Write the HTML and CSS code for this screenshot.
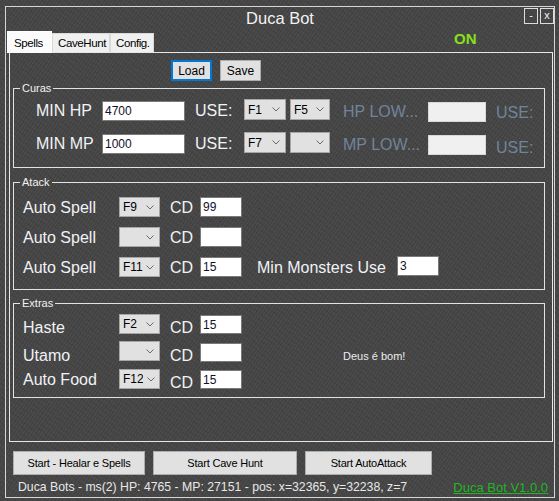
FILE: index.html
```html
<!DOCTYPE html>
<html>
<head>
<meta charset="utf-8">
<link rel="stylesheet" href="styles.css">
</head>
<body>
<div class="window">
  <div class="titlebar">
    <span></span>
    <span class="title">Duca Bot</span>
    <div class="winctl"><span class="ctl">-</span><span class="ctl">x</span></div>
  </div>
  <div class="tabrow">
    <div class="tabs">
      <span class="tab active">Spells</span>
      <span class="tab">CaveHunt</span>
      <span class="tab">Config.</span>
    </div>
    <span class="on">ON</span>
  </div>
  <div class="panel">
    <div class="toolbar">
      <span class="btn focus">Load</span>
      <span class="btn">Save</span>
    </div>

    <fieldset class="group curas">
      <legend>Curas</legend>
      <div class="row crow">
        <span class="big lbl-min">MIN HP</span>
        <span class="tb tb-min">4700</span>
        <span class="big lbl-use">USE:</span>
        <span class="sel sel-a">F1<svg viewBox="0 0 8 5"><polyline points="0.5,0.5 4,4 7.5,0.5"/></svg></span>
        <span class="sel sel-b">F5<svg viewBox="0 0 8 5"><polyline points="0.5,0.5 4,4 7.5,0.5"/></svg></span>
        <span class="big dis lbl-low">HP LOW...</span>
        <span class="tb disabled"></span>
        <span class="big dis lbl-use2">USE:</span>
      </div>
      <div class="row crow second">
        <span class="big lbl-min">MIN MP</span>
        <span class="tb tb-min">1000</span>
        <span class="big lbl-use">USE:</span>
        <span class="sel sel-a">F7<svg viewBox="0 0 8 5"><polyline points="0.5,0.5 4,4 7.5,0.5"/></svg></span>
        <span class="sel sel-b"><svg viewBox="0 0 8 5"><polyline points="0.5,0.5 4,4 7.5,0.5"/></svg></span>
        <span class="big dis lbl-low">MP LOW...</span>
        <span class="tb disabled"></span>
        <span class="big dis lbl-use2 low2">USE:</span>
      </div>
    </fieldset>

    <fieldset class="group atack">
      <legend>Atack</legend>
      <div class="row arow">
        <span class="big lbl-spell">Auto Spell</span>
        <span class="sel sel-c">F9<svg viewBox="0 0 8 5"><polyline points="0.5,0.5 4,4 7.5,0.5"/></svg></span>
        <span class="big lbl-cd">CD</span>
        <span class="tb tb-cd">99</span>
      </div>
      <div class="row arow">
        <span class="big lbl-spell">Auto Spell</span>
        <span class="sel sel-c"><svg viewBox="0 0 8 5"><polyline points="0.5,0.5 4,4 7.5,0.5"/></svg></span>
        <span class="big lbl-cd">CD</span>
        <span class="tb tb-cd"></span>
      </div>
      <div class="row arow">
        <span class="big lbl-spell">Auto Spell</span>
        <span class="sel sel-c">F11<svg viewBox="0 0 8 5"><polyline points="0.5,0.5 4,4 7.5,0.5"/></svg></span>
        <span class="big lbl-cd">CD</span>
        <span class="tb tb-cd">15</span>
        <span class="big lbl-mon">Min Monsters Use</span>
        <span class="tb tb-cd tb-mon">3</span>
      </div>
    </fieldset>

    <fieldset class="group extras">
      <legend>Extras</legend>
      <div class="row erow">
        <span class="big lbl-spell lbl-x1">Haste</span>
        <span class="sel sel-c">F2<svg viewBox="0 0 8 5"><polyline points="0.5,0.5 4,4 7.5,0.5"/></svg></span>
        <span class="big lbl-cd lbl-x1">CD</span>
        <span class="tb tb-cd tb-x1">15</span>
      </div>
      <div class="row erow erow2">
        <span class="big lbl-spell lbl-x2">Utamo</span>
        <span class="sel sel-c"><svg viewBox="0 0 8 5"><polyline points="0.5,0.5 4,4 7.5,0.5"/></svg></span>
        <span class="big lbl-cd lbl-x2">CD</span>
        <span class="tb tb-cd tb-x2"></span>
        <span class="note">Deus é bom!</span>
      </div>
      <div class="row erow erow3">
        <span class="big lbl-spell lbl-x4">Auto Food</span>
        <span class="sel sel-c clip"><span class="seltext">F12</span><svg viewBox="0 0 8 5"><polyline points="0.5,0.5 4,4 7.5,0.5"/></svg></span>
        <span class="big lbl-cd lbl-x3">CD</span>
        <span class="tb tb-cd tb-x1">15</span>
      </div>
    </fieldset>
  </div>

  <div class="footer">
    <div class="actions">
      <span class="btn act act1">Start - Healar e Spells</span>
      <span class="btn act act2">Start Cave Hunt</span>
      <span class="btn act act3">Start AutoAttack</span>
    </div>
    <div class="status">
      <span class="stat">Duca Bots - ms(2) HP: 4765 - MP: 27151 - pos: x=32365, y=32238, z=7</span>
      <span class="ver">Duca Bot V1.0.0</span>
    </div>
  </div>
</div>
</body>
</html>
```

FILE: styles.css
```css
* { box-sizing: border-box; }

html, body {
  margin: 0;
  padding: 0;
  width: 559px;
  height: 501px;
  overflow: hidden;
}

body {
  font-family: "Liberation Sans", Arial, sans-serif;
  background-color: #454545;
  background-image:
    repeating-linear-gradient(125deg, rgba(255,255,255,0.04) 0 1px, transparent 1px 3px),
    repeating-linear-gradient(40deg, rgba(0,0,0,0.07) 0 1px, transparent 1px 5px);
  padding: 6px 0 0 5px;
}

.window {
  width: 550px;
  height: 492px;
  border: 1px solid #d6d6d6;
  display: flex;
  flex-direction: column;
}

.titlebar {
  height: 24px;
  display: grid;
  grid-template-columns: 1fr auto 1fr;
}

.title {
  font-size: 16.5px;
  line-height: 22px;
  color: #f2f2f2;
}

.winctl {
  justify-self: end;
  display: flex;
  gap: 2px;
  margin-top: 1px;
}

.ctl {
  width: 14px;
  height: 16px;
  border: 1px solid #dcdcdc;
  color: #f4f4f4;
  font-size: 11px;
  line-height: 13px;
  text-align: center;
}

.tabrow {
  height: 21px;
  display: flex;
  align-items: flex-end;
}

.tabs {
  display: flex;
  align-items: flex-end;
  margin-left: 1px;
  position: relative;
  z-index: 2;
}

.tab {
  height: 19px;
  padding: 0 5px;
  background: #f0f0f0;
  border: 1px solid #d9d9d9;
  border-bottom: none;
  font-size: 11.5px;
  letter-spacing: -0.4px;
  line-height: 18px;
  color: #000;
}

.tab.active {
  height: 22px;
  width: 45px;
  padding: 0 6px;
  margin-bottom: -1px;
  background: #fbfbfb;
  border-color: #ffffff;
  line-height: 22px;
}

.tab:nth-child(2) { width: 58px; }
.tab:nth-child(3) { width: 44px; }

.on {
  align-self: flex-start;
  margin-left: 300px;
  font-size: 15px;
  font-weight: bold;
  line-height: 16px;
  color: #86e01e;
}

.panel {
  margin-left: 3px;
  width: 544px;
  height: 390px;
  border: 1px solid #e6e6e6;
  padding-left: 3px;
}

.toolbar {
  display: flex;
  gap: 8px;
  margin-top: 7px;
  margin-left: 158px;
}

.btn {
  display: flex;
  align-items: center;
  justify-content: center;
  background: #e1e1e1;
  border: 1px solid #adadad;
  color: #000;
  font-size: 12px;
}

.toolbar .btn {
  width: 41px;
  height: 21px;
}

.btn.focus {
  border: 2px solid #0078d7;
}

.group {
  margin: 0;
  width: 532px;
  border: 1px solid #e2e2e2;
  padding: 0;
  min-width: 0;
}

.group legend {
  font-size: 11px;
  line-height: 12px;
  color: #f2f2f2;
  padding: 0 2px;
  margin-left: 6px;
}

.row {
  display: flex;
  align-items: flex-start;
}

.big {
  font-size: 16px;
  color: #f0f2f6;
  white-space: nowrap;
}

.dis { color: #71849a; }

.tb {
  display: block;
  height: 20px;
  background: #ffffff;
  border: 1px solid #7a7a7a;
  font-size: 12px;
  line-height: 18px;
  padding-left: 2px;
  color: #10102a;
}

.tb.disabled {
  width: 58px;
  margin-top: 3px;
  background: #f0f0f0;
  border-color: #d8d8d8;
}

.sel {
  display: flex;
  align-items: center;
  justify-content: space-between;
  height: 21px;
  background: #e1e1e1;
  border: 1px solid #a6a6a6;
  font-size: 12px;
  color: #000;
  padding: 0 5px 0 3px;
}

.sel svg {
  width: 8px;
  height: 5px;
  margin-left: auto;
  fill: none;
  stroke: #6a6a6a;
  stroke-width: 1;
}

/* Curas */
.curas { margin-top: 1px; }
.crow { height: 22px; margin-top: 5px; }
.crow.second { margin-top: 11px; margin-bottom: 13px; }
.crow .big { line-height: 22px; }
.lbl-min { margin-left: 22px; width: 66px; padding-top: 1px; }
.tb-min { width: 83px; margin-top: 2px; }
.lbl-use { margin-left: 10px; width: 49px; padding-top: 1px; }
.sel-a { width: 42px; }
.sel-b { width: 40px; margin-left: 4px; }
.lbl-low { margin-left: 13px; width: 85px; margin-top: 2px; }
.lbl-use2 { margin-left: 10px; margin-top: 3px; }
.low2 { margin-top: 5px; }

/* Atack */
.atack { margin-top: 8px; }
.arow { height: 20px; margin-top: 10px; }
.arow:first-of-type { margin-top: 9px; }
.arow:last-child { margin-bottom: 12px; }
.arow .big, .erow .big { line-height: 20px; }
.arow .big { padding-top: 1px; }
.lbl-spell { margin-left: 9px; width: 96px; }
.sel-c { width: 41px; height: 20px; }
.lbl-cd { margin-left: 10px; width: 30px; }
.tb-cd { width: 42px; }
.lbl-mon { margin-left: 15px; width: 140px; }
.tb-mon { margin-top: -1px; }

/* Extras */
.extras { margin-top: 7px; }
.erow { height: 21px; margin-top: 5px; }
.erow2 { margin-top: 6px; }
.erow3 { margin-top: 7px; margin-bottom: 7px; }
.lbl-x1 { margin-top: 4px; }
.lbl-x2 { margin-top: 5px; }
.lbl-x3 { margin-top: 4px; }
.lbl-x4 { margin-top: 1px; }
.tb-x1 { margin-top: 1px; height: 19px; }
.tb-x2 { margin-top: 2px; height: 19px; }

.clip { overflow: hidden; padding-right: 4px; }
.seltext { width: 20px; overflow: hidden; white-space: nowrap; }

.note {
  margin-left: 101px;
  margin-top: 9px;
  font-size: 11px;
  color: #ececec;
}

/* Footer */
.footer {
  padding-left: 7px;
}

.actions {
  display: flex;
  margin-top: 9px;
}

.act {
  height: 24px;
  font-size: 11px;
  letter-spacing: -0.2px;
}

.act1 { width: 132px; }
.act2 { width: 144px; margin-left: 8px; }
.act3 { width: 127px; margin-left: 8px; }

.status {
  display: flex;
  justify-content: space-between;
  align-items: center;
  height: 20px;
  margin-top: 2px;
  padding-left: 5px;
  padding-right: 6px;
}

.stat {
  font-size: 12.25px;
  color: #e8e8e8;
  white-space: nowrap;
}

.ver {
  font-size: 13px;
  color: #22b422;
  text-decoration: underline;
  white-space: nowrap;
}
```
